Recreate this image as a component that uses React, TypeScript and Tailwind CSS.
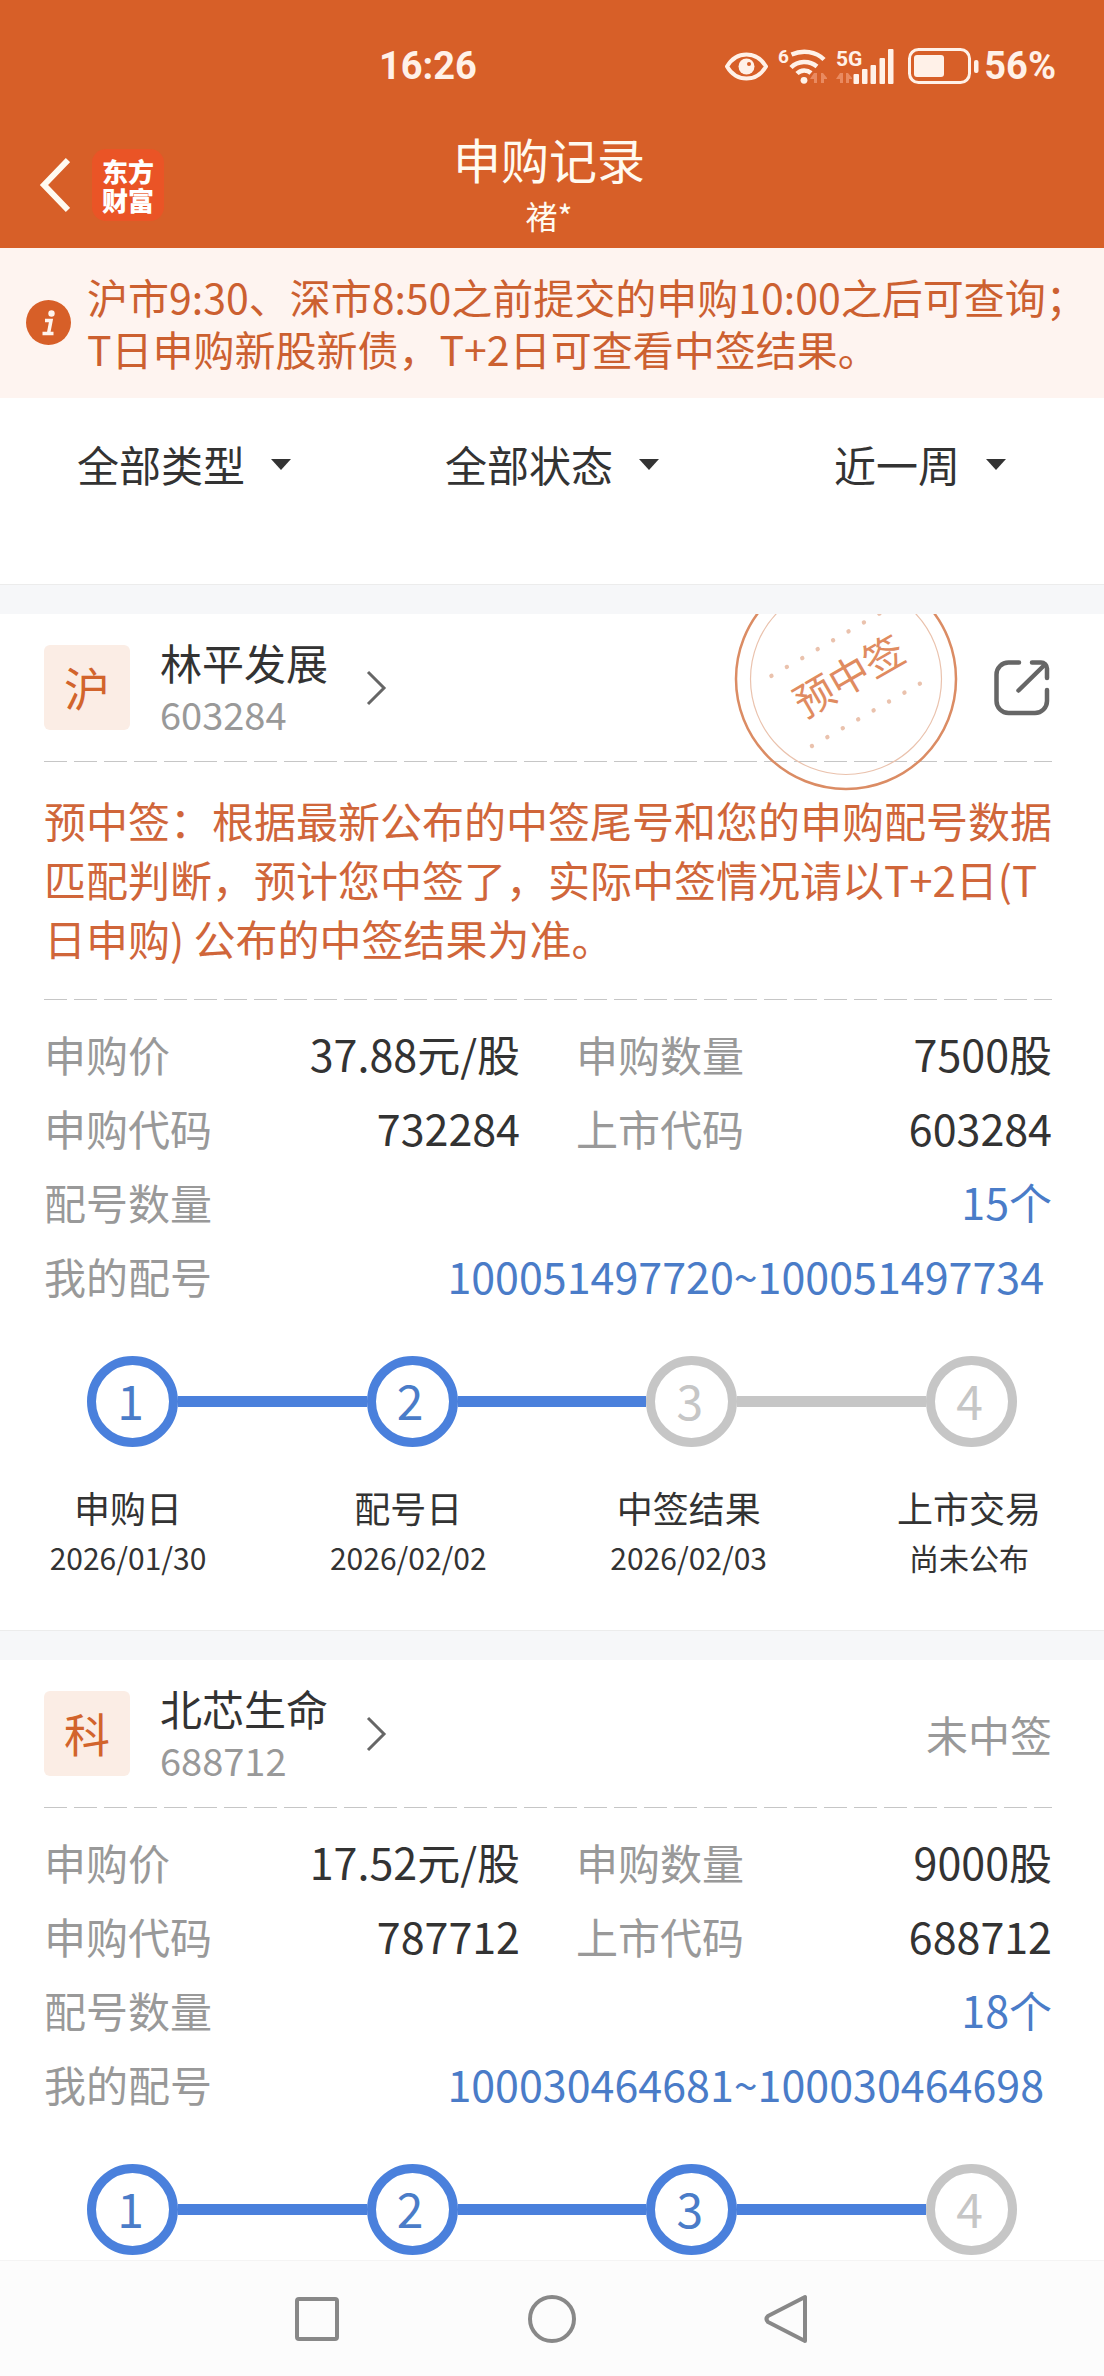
import React from "react";

type Step = { title: string; date?: string };

type RecordData = {
  market: string;
  name: string;
  code: string;
  price: string;
  amount: string;
  applyCode: string;
  listCode: string;
  count: string;
  range: string;
  done: number;
  steps: Step[];
  notice?: string;
};

const records: RecordData[] = [
  {
    market: "沪",
    name: "林平发展",
    code: "603284",
    price: "37.88元/股",
    amount: "7500股",
    applyCode: "732284",
    listCode: "603284",
    count: "15个",
    range: "100051497720~100051497734",
    done: 2,
    steps: [
      { title: "申购日", date: "2026/01/30" },
      { title: "配号日", date: "2026/02/02" },
      { title: "中签结果", date: "2026/02/03" },
      { title: "上市交易", date: "尚未公布" },
    ],
    notice:
      "预中签：根据最新公布的中签尾号和您的申购配号数据匹配判断，预计您中签了，实际中签情况请以T+2日(T日申购) 公布的中签结果为准。",
  },
  {
    market: "科",
    name: "北芯生命",
    code: "688712",
    price: "17.52元/股",
    amount: "9000股",
    applyCode: "787712",
    listCode: "688712",
    count: "18个",
    range: "100030464681~100030464698",
    done: 3,
    steps: [],
  },
];

function StatusBar() {
  return (
    <div className="flex items-center justify-between pl-[379px] pr-[48px] pt-12 font-['Roboto','Noto_Sans_CJK_SC',sans-serif] text-[38px] leading-9 font-bold text-[#fff1e8]">
      <span>16:26</span>
      <div className="flex items-center">
        <svg width="43" height="36" viewBox="0 0 43 36" fill="none" aria-label="护眼模式">
          <path d="M2 18.5C7 10 14 6.5 21.500 6.500S36 10 41 18.500C36 27 29 30.500 21.500 30.500S7 27 2 18.500Z" stroke="currentColor" strokeWidth="4" strokeLinejoin="round" />
          <circle cx="21.500" cy="18.500" r="8" fill="currentColor" />
          <circle cx="24" cy="16" r="2" fill="#d75f28" />
        </svg>
        <svg className="ml-[10px] overflow-visible" width="49" height="36" viewBox="0 0 49 36" fill="none" aria-label="无线网络">
          <text x="0" y="15" fontSize="19" fontWeight="700" fill="currentColor">6</text>
          <path d="M13.500 6.500C25 1.500 38 3.500 46 11.500M13 19.500C20 12.500 31 12 39 18.500M19 25.500C23 21.500 29 21.500 33 25" stroke="currentColor" strokeWidth="4.500" />
          <circle cx="26" cy="32.300" r="3.400" fill="currentColor" />
          <path d="M36 25h3v10h-3v-4h-4zM43 25h2l4 5v1h-3v4h-3z" fill="#e98a60" />
        </svg>
        <svg className="ml-[9px] overflow-visible" width="58" height="36" viewBox="0 0 58 36" aria-label="5G信号">
          <text x="0" y="18" fontSize="21" fontWeight="700" fill="currentColor">5G</text>
          <path d="M4 25h3v10H4v-4H0zM10 25h2l4 5v1h-3v4h-3z" fill="#e98a60" />
          <g fill="currentColor">
            <rect x="17.500" y="26" width="5.500" height="10" rx="1" />
            <rect x="26" y="21" width="5.500" height="15" rx="1" />
            <rect x="34.500" y="17" width="5.500" height="19" rx="1" />
            <rect x="43.500" y="10" width="5.500" height="26" rx="1" />
            <rect x="52" y="1" width="5.500" height="35" rx="1" />
          </g>
        </svg>
        <svg className="ml-[14px]" width="71" height="36" viewBox="0 0 71 36" fill="none" aria-label="电量">
          <rect x="1.500" y="1.500" width="60" height="33" rx="9" stroke="currentColor" strokeWidth="3" />
          <rect x="6" y="7" width="30" height="22" rx="3" fill="currentColor" />
          <rect x="66" y="12" width="4.500" height="13" rx="2" fill="currentColor" />
        </svg>
        <span className="ml-[5px]">56%</span>
      </div>
    </div>
  );
}

function Header() {
  return (
    <header className="bg-[#d75f28] text-[#fffaf0]">
      <StatusBar />
      <div className="grid grid-cols-[1fr_auto_1fr] pt-[46px] pr-1.5 pb-[8px]">
        <div className="flex items-center gap-[22px] pl-[39px]">
          <button type="button" aria-label="返回">
            <svg width="31" height="56" viewBox="0 0 31 56" fill="none" stroke="currentColor" strokeWidth="6">
              <path d="M29 3L5 28L29 53" />
            </svg>
          </button>
          <div className="grid h-[72px] w-[72px] place-content-center rounded-[14px] bg-[#ea5426] text-[26px] leading-[29px] font-black text-white">
            <span>东方</span>
            <span>财富</span>
          </div>
        </div>
        <div className="flex flex-col items-center">
          <h1 className="text-[48px] leading-[56px]">申购记录</h1>
          <p className="mt-1 text-[32px] leading-[50px]">褚*</p>
        </div>
      </div>
    </header>
  );
}

function Notice() {
  return (
    <section className="flex items-center gap-4 bg-[#fef4f0] pt-[22px] pr-2 pb-6 pl-[26px] text-[#cc6030]">
      <svg className="shrink-0" width="45" height="45" viewBox="0 0 45 45" fill="none" aria-hidden="true">
        <circle cx="22.500" cy="22.500" r="22.500" fill="#d75f28" />
        <circle cx="25.500" cy="13.500" r="3.200" fill="#fff4ee" />
        <path d="M19 20.500h6l-2.500 13M16.500 33.500h11" stroke="#fff4ee" strokeWidth="3.500" />
      </svg>
      <p className="text-[41px] leading-[52px]">
        沪市9:30、深市8:50之前提交的申购10:00之后可查询；
        <br />
        T日申购新股新债，T+2日可查看中签结果。
      </p>
    </section>
  );
}

function Filter({ label, value }: { label: string; value: string }) {
  return (
    <div className="relative flex items-center">
      <select
        aria-label={label}
        defaultValue={value}
        className="h-[60px] appearance-none bg-transparent pr-[46px] text-[42px] leading-[60px] text-[#333] field-sizing-content outline-none"
      >
        <option>{value}</option>
      </select>
      <svg className="pointer-events-none absolute right-0" width="20" height="11" viewBox="0 0 20 11" aria-hidden="true">
        <path d="M0 0H20L10 11Z" fill="#333" />
      </svg>
    </div>
  );
}

function Divider() {
  return <div className="h-[30px] border-t border-[#ececec] bg-[#f6f7f9]" />;
}

function Dashes() {
  return (
    <div className="h-px bg-[repeating-linear-gradient(90deg,#c6c6c6_0px,#c6c6c6_23px,transparent_23px,transparent_30px)]" />
  );
}

function Stamp() {
  const dots = [0, 1, 2, 3, 4, 5, 6, 7];
  return (
    <div className="pointer-events-none absolute top-0 right-[146px] h-[177px] w-[224px] overflow-hidden">
      <svg className="absolute bottom-0" width="224" height="224" viewBox="0 0 224 224" fill="none">
        <circle cx="112" cy="112" r="110" stroke="#db8c64" strokeWidth="2.500" />
        <circle cx="112" cy="112" r="95.500" stroke="#eac2ad" strokeWidth="1.200" />
        <g transform="rotate(-30 112 112)">
          {dots.map((d) => (
            <React.Fragment key={d}>
              <circle cx={49 + d * 17.8} cy="72" r="2.200" fill="#eac2ad" />
              <circle cx={49 + d * 17.8} cy="153" r="2.200" fill="#eac2ad" />
            </React.Fragment>
          ))}
          <text x="116" y="126" textAnchor="middle" fontSize="40" fill="#e08b60">
            预中签
          </text>
        </g>
      </svg>
    </div>
  );
}

function Field({ label, value, wide }: { label: string; value: string; wide?: boolean }) {
  return (
    <div className={wide ? "col-span-2 flex h-[74px] items-center justify-between" : "flex h-[74px] items-center justify-between"}>
      <dt className="text-[42px] text-[#999]">{label}</dt>
      <dd className={wide ? "text-[43px] text-[#4a7cc8]" : "text-[43px] text-[#333]"}>{value}</dd>
    </div>
  );
}

function Progress({ done, steps }: { done: number; steps: Step[] }) {
  return (
    <div className="mt-11">
      <ol className="flex items-center pr-[35px] pl-[43px]">
        {[1, 2, 3, 4].map((n) => (
          <React.Fragment key={n}>
            {n > 1 && (
              <li aria-hidden="true" className={n - 1 <= done ? "h-[11px] flex-1 bg-[#4a80dc]" : "h-[11px] flex-1 bg-[#c6c6c6]"} />
            )}
            <li
              className={
                n <= done
                  ? "flex h-[91px] w-[91px] items-center justify-center rounded-full border-9 border-[#4a80dc] pr-1 pb-1.5 text-[48px] leading-none text-[#4a7cc8]"
                  : "flex h-[91px] w-[91px] items-center justify-center rounded-full border-9 border-[#c6c6c6] pr-1 pb-1.5 text-[48px] leading-none text-[#c6c6c6]"
              }
            >
              {n}
            </li>
          </React.Fragment>
        ))}
      </ol>
      {steps.length > 0 && (
        <ul className="mt-9 flex justify-between pr-0.5 pl-[3px] text-[#333]">
          {steps.map((s) => (
            <li key={s.title} className="flex w-[162px] flex-col items-center">
              <span className="text-[36px] leading-[48px]">{s.title}</span>
              <span className="mt-1 text-[30px] leading-[44px]">{s.date}</span>
            </li>
          ))}
        </ul>
      )}
    </div>
  );
}

function RecordCard({ r }: { r: RecordData }) {
  return (
    <article className={r.steps.length > 0 ? "relative bg-white pr-[52px] pb-[51px] pl-11" : "relative bg-white pr-[52px] pb-[5px] pl-11"}>
      <div className="flex h-[147px] items-center justify-between">
        <a href="#detail" className="flex items-center">
          <span className="flex h-[85px] w-[86px] items-center justify-center rounded-md bg-[#fbede5] pb-1 text-[46px] leading-none text-[#d2642c]">
            {r.market}
          </span>
          <span className="ml-[30px] flex flex-col">
            <span className="text-[42px] leading-[52px] text-[#333]">{r.name}</span>
            <span className="text-[38px] leading-[52px] text-[#999]">{r.code}</span>
          </span>
          <svg className="ml-[38px]" width="21" height="36" viewBox="0 0 21 36" fill="none" stroke="#666" strokeWidth="3" aria-hidden="true">
            <path d="M2 2L18 18L2 34" />
          </svg>
        </a>
        {r.notice ? (
          <button type="button" aria-label="分享">
            <svg width="58" height="56" viewBox="0 0 58 56" fill="none" stroke="#666" strokeWidth="4.500" strokeLinecap="round" strokeLinejoin="round">
              <path d="M25 2.500H14.500A12 12 0 0 0 2.500 14.500V41A12 12 0 0 0 14.500 53H41A12 12 0 0 0 53 41V30" />
              <path d="M38 2.500H47A6 6 0 0 1 53 8.500V18" />
              <path d="M24.500 30.500L51 4.500" />
            </svg>
          </button>
        ) : (
          <span className="text-[42px] text-[#999]">未中签</span>
        )}
      </div>
      <Dashes />
      {r.notice && (
        <>
          <p className="-mr-2 pt-[28px] pb-[32px] text-[42px] leading-[59px] text-[#d0663a]">{r.notice}</p>
          <Dashes />
          <Stamp />
        </>
      )}
      <dl className="grid grid-cols-2 gap-x-14 pt-4">
        <Field label="申购价" value={r.price} />
        <Field label="申购数量" value={r.amount} />
        <Field label="申购代码" value={r.applyCode} />
        <Field label="上市代码" value={r.listCode} />
        <Field label="配号数量" value={r.count} wide />
        <div className="col-span-2 flex h-[74px] items-center justify-between pr-2">
          <dt className="text-[42px] text-[#999]">我的配号</dt>
          <dd className="text-[43px] text-[#4a7cc8]">{r.range}</dd>
        </div>
      </dl>
      <Progress done={r.done} steps={r.steps} />
    </article>
  );
}

function NavBar() {
  return (
    <nav className="sticky bottom-0 flex h-[116px] items-center justify-center gap-[187px] border-t border-[#f4f4f4] bg-[#fcfcfc] text-[#888]">
      <button type="button" aria-label="最近任务">
        <svg width="48" height="50" viewBox="0 0 48 50" fill="none" stroke="currentColor" strokeWidth="4">
          <rect x="4" y="5" width="40" height="40" rx="2" />
        </svg>
      </button>
      <button type="button" aria-label="主屏幕">
        <svg width="48" height="50" viewBox="0 0 48 50" fill="none" stroke="currentColor" strokeWidth="4">
          <circle cx="24" cy="25" r="22" />
        </svg>
      </button>
      <button type="button" aria-label="返回上一页">
        <svg width="48" height="50" viewBox="0 0 48 50" fill="none" stroke="currentColor" strokeWidth="4" strokeLinejoin="round">
          <path d="M42 3V47L5 28Q2 25 5 22Z" />
        </svg>
      </button>
    </nav>
  );
}

export default function App() {
  return (
    <div className="flex min-h-screen flex-col bg-white font-['Noto_Sans_CJK_SC',sans-serif]">
      <Header />
      <main className="flex-1">
        <Notice />
        <div className="grid h-[186px] grid-cols-3 items-start justify-items-center pt-9">
          <Filter label="类型" value="全部类型" />
          <Filter label="状态" value="全部状态" />
          <Filter label="时间" value="近一周" />
        </div>
        {records.map((r) => (
          <React.Fragment key={r.code}>
            <Divider />
            <RecordCard r={r} />
          </React.Fragment>
        ))}
      </main>
      <NavBar />
    </div>
  );
}
